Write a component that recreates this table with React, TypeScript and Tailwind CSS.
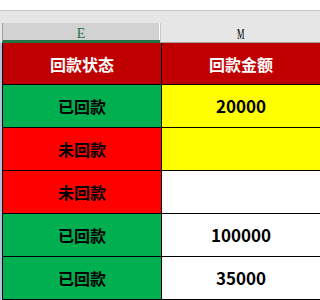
const rows = [
  { status: "已回款", amount: "20000", statusBg: "bg-[#00b050]", amountBg: "bg-[#ffff00]" },
  { status: "未回款", amount: "", statusBg: "bg-[#ff0000]", amountBg: "bg-[#ffff00]" },
  { status: "未回款", amount: "", statusBg: "bg-[#ff0000]", amountBg: "bg-white" },
  { status: "已回款", amount: "100000", statusBg: "bg-[#00b050]", amountBg: "bg-white" },
  { status: "已回款", amount: "35000", statusBg: "bg-[#00b050]", amountBg: "bg-white" },
];

const cellFont = { fontFamily: '"Noto Sans CJK SC", "Noto Sans", sans-serif' };

export default function App() {
  return (
    <div className="w-[320px] h-[300px] overflow-hidden bg-white">
      {/* ribbon edge */}
      <div className="h-[10px] bg-white" />
      <div className="h-px bg-[#c6c6c6]" />
      <div className="h-[12px] bg-[#e6e6e6]" />

      {/* column letters */}
      <div className="flex h-[20px] bg-[#e6e6e6]" style={{ fontFamily: '"Liberation Serif", serif' }}>
        <div className="w-[2px] border-b-[3px] border-[#e6e6e6]" />
        <div className="w-[157px] flex items-center justify-center bg-[#d2d2d2] border-l border-[#a0a0a0] border-b-[3px] border-b-[#217346] text-[14px] text-[#217346] leading-none pt-[4px]">
          <span className="inline-block scale-y-110">E</span>
        </div>
        <div className="w-[2px] bg-white border-b-[3px] border-b-[#217346]" />
        <div className="flex-1 flex items-center justify-center border-l border-[#c8c8c8] border-b border-b-[#a0a0a0] text-[14px] text-black leading-none -ml-px pt-[4px]">
          <span className="inline-block pl-[2px] scale-x-[0.6] scale-y-110">M</span>
        </div>
      </div>

      <div className="flex">
        {/* row header strip */}
        <div className="w-[2px] bg-[#b4c0dc]" />
        <div className="flex-1 grid grid-cols-[159px_1fr] border-l border-black" style={cellFont}>
          <div className="h-[42px] flex items-center justify-center bg-[#c00000] border-r border-b border-black text-white font-bold text-[16px]">
            回款状态
          </div>
          <div className="h-[42px] flex items-center justify-center bg-[#c00000] border-b border-black text-white font-bold text-[16px]">
            回款金额
          </div>
          {rows.map((r, i) => (
            <div key={i} className="contents">
              <div
                className={`h-[43px] flex items-center justify-center border-r border-b border-black text-black font-bold text-[16px] ${r.statusBg}`}
              >
                {r.status}
              </div>
              <div
                className={`h-[43px] flex items-center justify-center border-b border-black text-black font-bold text-[17px] ${r.amountBg}`}
              >
                {r.amount}
              </div>
            </div>
          ))}
        </div>
      </div>
    </div>
  );
}
